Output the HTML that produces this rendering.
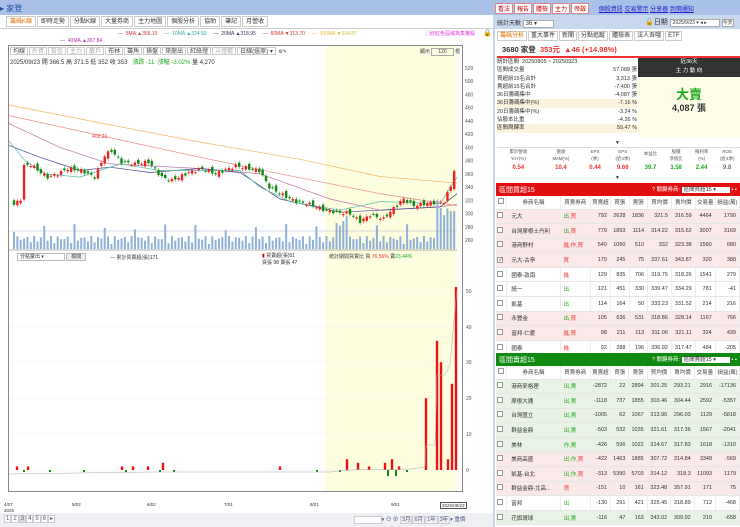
<!DOCTYPE html>
<html><head><meta charset="utf-8">
<style>
*{margin:0;padding:0;box-sizing:border-box}
body{width:740px;height:527px;overflow:hidden;background:#fff;font-family:"Liberation Sans","Noto Sans CJK TC",sans-serif;font-size:6px;color:#333;position:relative}
.a{position:absolute;white-space:nowrap}
.tb{background:#a9c1e6}
.tab{display:inline-block;border:1px solid #ccc;padding:1px 3px;margin-right:1px;background:#fff;font-size:6px;height:11px;line-height:8px}
table{border-collapse:collapse}
.tt td{height:14.6px;font-size:5.5px;border-bottom:1px solid #e6e6e6;border-right:1px solid #eee;text-align:right;padding-right:3px}
.tt td:nth-child(2){text-align:left;padding-left:4px}
.tt td:nth-child(3){text-align:left;padding-left:3px}
.tt tr.h td{height:13px;background:#fff;text-align:center;color:#444;padding:0}
.r td{background:#fbe8e8}.g td{background:#e8f3e6}.w td{background:#fff}
.cb{display:inline-block;width:6px;height:6px;border:1px solid #999;background:#fff}
</style></head><body>
<div class="a tb" style="left:0;top:0;width:740px;height:15px"></div>
<div class="a" style="left:0;top:3px;font-size:8px;color:#1a4fa8">▸ <span style="color:#1a4fa8">家登</span></div>
<div class="a" style="left:495px;top:3px;font-size:6px">
<span style="display:inline-block;border:1px solid #d88;background:#fff;color:#c00;padding:0 2px;margin-right:1px">看法</span><span style="display:inline-block;border:1px solid #d88;background:#fff;color:#c00;padding:0 2px;margin-right:1px">報告</span><span style="display:inline-block;border:1px solid #d88;background:#fff;color:#c00;padding:0 2px;margin-right:1px">體檢</span><span style="display:inline-block;border:1px solid #d88;background:#fff;color:#c00;padding:0 2px;margin-right:1px">主力</span><span style="display:inline-block;border:1px solid #d88;background:#fff;color:#c00;padding:0 2px">帝啟</span>
<span style="color:#22c;text-decoration:underline;margin-left:8px">個股資訊</span> <span style="color:#22c;text-decoration:underline">交易警示</span> <span style="color:#22c;text-decoration:underline">分享器</span> <span style="color:#22c;text-decoration:underline">到價通知</span></div>

<div class="a" style="left:6px;top:16px"><span class="tab" style="color:#e07000">籌碼K線</span><span class="tab">即時走勢</span><span class="tab">分點K線</span><span class="tab">大量券商</span><span class="tab">主力地圖</span><span class="tab">個股分析</span><span class="tab">協助</span><span class="tab">筆記</span><span class="tab">月營收</span></div>
<div class="a" style="left:0;top:28px;width:493px;height:499px;border-top:1px solid #ccc"></div>
<div class="a" style="left:118px;top:31px;font-size:5px"><span style="color:#c33">— &nbsp;5MA ▲356.10</span> &nbsp;&nbsp;&nbsp; <span style="color:#3a9">— &nbsp;10MA ▲324.50</span> &nbsp;&nbsp;&nbsp; <span style="color:#336">— &nbsp;20MA ▲318.95</span> &nbsp;&nbsp;&nbsp; <span style="color:#d33">— &nbsp;60MA ▼313.70</span> &nbsp;&nbsp;&nbsp; <span style="color:#db3">— &nbsp;100MA ▼334.87</span></div>
<div class="a" style="left:60px;top:38px;font-size:5px;color:#a3a">— &nbsp;40MA ▲307.84</div>
<div class="a" style="left:425px;top:30px;font-size:5px;color:#d3d">◯欣紅色區域為集權股</div>
<div class="a" style="left:483px;top:29px;font-size:7px">🔒</div>

<div class="a" style="left:8px;top:45px;width:455px;height:447px;border:1px solid #888"></div>
<div class="a" style="left:325px;top:46px;width:132px;height:445px;background:#fdfde0"></div>
<div class="a" style="left:10px;top:47px;font-size:5px;color:#444"><span class="tab" style="padding:0 2px;height:8px">均線</span><span class="tab" style="padding:0 2px;height:8px;color:#aaa">外資</span><span class="tab" style="padding:0 2px;height:8px;color:#aaa">投信</span><span class="tab" style="padding:0 2px;height:8px;color:#aaa">主力</span><span class="tab" style="padding:0 2px;height:8px;color:#aaa">散戶</span><span class="tab" style="padding:0 2px;height:8px">布林</span><span class="tab" style="padding:0 2px;height:8px">籌角</span><span class="tab" style="padding:0 2px;height:8px">操盤</span><span class="tab" style="padding:0 2px;height:8px">來龍出</span><span class="tab" style="padding:0 2px;height:8px">紅綠燈</span><span class="tab" style="padding:0 2px;height:8px;color:#aaa">斗燈籠</span><span class="tab" style="padding:0 2px;height:8px">日線(還原) ▾</span> ⚙✎</div>
<div class="a" style="left:420px;top:48px;font-size:5px">顯示 <span style="border:1px solid #aaa;padding:0 6px">120</span> 根</div>
<div class="a" style="left:10px;top:57px;font-size:6px">2025/09/23 開 366.5 高 371.5 低 352 收 353 &nbsp; <span style="color:#2a2">漲跌 -11 &nbsp;漲幅 -3.02%</span> 量 4,270</div>

<svg class="a" style="left:0;top:0" width="493" height="527" id="sv"></svg>

<div class="a" style="left:17px;top:253px;font-size:5px"><span style="border:1px solid #bbb;padding:0 20px 0 2px">分點彙出 ▾</span> <span style="border:1px solid #bbb;background:#eee;padding:0 4px">檢閱</span></div>
<div class="a" style="left:110px;top:254px;font-size:5px">— 累計買賣超(張)171</div>
<div class="a" style="left:262px;top:253px;font-size:5px;line-height:7px"><span style="color:#c00">▮</span> 買賣超(張)51<br>買張 98 賣張 47</div>
<div class="a" style="left:329px;top:253px;font-size:5px">統計期間買賣比 買 <span style="color:#e33">76.56%</span> 賣<span style="color:#2a2">23.44%</span></div>
<div class="a" style="left:4px;top:502px;font-size:4.5px;line-height:6px">4/07<br>2025</div>
<div class="a" style="left:72px;top:502px;font-size:4.5px">5/02</div>
<div class="a" style="left:147px;top:502px;font-size:4.5px">6/02</div>
<div class="a" style="left:224px;top:502px;font-size:4.5px">7/01</div>
<div class="a" style="left:310px;top:502px;font-size:4.5px">8/01</div>
<div class="a" style="left:391px;top:502px;font-size:4.5px">9/01</div>
<div class="a" style="left:440px;top:502px;font-size:4.5px;border:1px solid #555;padding:0 1px">2025/09/23</div>
<div class="a" style="left:0;top:513px;width:493px;height:14px;background:#eef0f4"></div>
<div class="a" style="left:4px;top:515px;font-size:6px;color:#558"><span style="border:1px solid #ccc;background:#fff;padding:0 1px">1</span><span style="border:1px solid #ccc;background:#fff;padding:0 1px">2</span><span style="border:1px solid #ccc;background:#ddd;padding:0 1px">3</span><span style="border:1px solid #ccc;background:#fff;padding:0 1px">4</span><span style="border:1px solid #ccc;background:#fff;padding:0 1px">5</span><span style="border:1px solid #ccc;background:#fff;padding:0 1px">6</span><span style="border:1px solid #ccc;background:#fff;padding:0 1px">▸</span></div>
<div class="a" style="left:354px;top:515px;font-size:5.5px;color:#558"><span style="border:1px solid #ccc;background:#fff;padding:0 12px">&nbsp;</span>▾ ⊖ ⊕ <span style="border:1px solid #ccc;padding:0 1px">3月</span><span style="border:1px solid #ccc;padding:0 1px">6月</span><span style="border:1px solid #ccc;padding:0 1px">1年</span><span style="border:1px solid #ccc;padding:0 1px">3年</span>▾ 重價</div>
<div class="a" style="left:493px;top:15px;width:2px;height:512px;background:#c8d4e8"></div>

<div class="a" style="left:495px;top:15px;width:245px;height:14px;background:#c8d8ef"></div>
<div class="a" style="left:497px;top:18px;font-size:6px">統計天數 <span style="border:1px solid #aaa;background:#fff;padding:0 16px 0 2px">36 ▾</span></div>
<div class="a" style="left:645px;top:17px;font-size:7px">🔓日期 <span style="border:1px solid #aaa;background:#fff;font-size:5px;padding:0 12px 0 2px">2025/9/23 ▾ ◂ ▸</span> <span style="border:1px solid #aaa;background:#fff;font-size:5px">今天</span></div>
<div class="a" style="left:497px;top:31px;font-size:5.5px"><span class="tab" style="color:#e07000;padding:0 2px;height:10px">籌碼分析</span><span class="tab" style="padding:0 2px;height:10px">重大事件</span><span class="tab" style="padding:0 2px;height:10px">新聞</span><span class="tab" style="padding:0 2px;height:10px">分點追蹤</span><span class="tab" style="padding:0 2px;height:10px">體檢表</span><span class="tab" style="padding:0 2px;height:10px">法人吾哦</span><span class="tab" style="padding:0 2px;height:10px">ETF</span></div>
<div class="a" style="left:502px;top:44px;font-size:7.5px;font-weight:bold"><span style="color:#333">3680 家登</span> &nbsp;<span style="color:#e33">353元 &nbsp;▲46 (+14.98%)</span></div>
<div class="a" style="left:497px;top:56px;width:243px;height:1.5px;background:#e33"></div>
<div class="a" style="left:497px;top:58px;width:140px;font-size:5.5px;line-height:8.3px">
<div style="display:flex;justify-content:space-between"><span>統計區間 &nbsp;20250805 ~ 20250923</span></div>
<div style="display:flex;justify-content:space-between"><span>區間成交量</span><span>57,089 張</span></div>
<div style="display:flex;justify-content:space-between"><span>買超前15名合計</span><span>3,313 張</span></div>
<div style="display:flex;justify-content:space-between"><span>賣超前15名合計</span><span>-7,400 張</span></div>
<div style="display:flex;justify-content:space-between"><span>36日籌碼集中</span><span>-4,087 張</span></div>
<div style="display:flex;justify-content:space-between;background:#fbf3dc"><span>36日籌碼集中(%)</span><span>-7.16 %</span></div>
<div style="display:flex;justify-content:space-between"><span>20日籌碼集中(%)</span><span>-3.24 %</span></div>
<div style="display:flex;justify-content:space-between"><span>佔股本比重</span><span>-4.26 %</span></div>
<div style="display:flex;justify-content:space-between;background:#fbf3dc"><span>區間周轉率</span><span>59.47 %</span></div></div>
<div class="a" style="left:638px;top:58px;width:102px;height:19px;background:#333;color:#fff;font-size:5.5px;text-align:center;line-height:9px">近36天<br>主 力 動 向</div>
<div class="a" style="left:638px;top:77px;width:102px;height:61px;background:#fdfde8"></div>
<div class="a" style="left:638px;top:84px;width:102px;text-align:center;font-size:13px;font-weight:bold;color:#2a2">大賣</div>
<div class="a" style="left:638px;top:101px;width:102px;text-align:center;font-size:9px;font-weight:bold;color:#333">4,087 張</div>
<div class="a" style="left:615px;top:140px;font-size:5px">▼</div>
<div class="a" style="left:497px;top:147px;width:243px;border-top:1px solid #ddd"></div>
<div class="a" style="left:497px;top:147px;width:243px;display:flex;font-size:4.5px;text-align:center;color:#555">
<div style="flex:1;line-height:7px;padding-top:1px">累計營收<br>YoY(%)</div><div style="flex:1;line-height:7px;padding-top:1px">營收<br>MoM(%)</div><div style="flex:.6;line-height:7px;padding-top:1px">EPS<br>(季)</div><div style="flex:.7;line-height:7px;padding-top:1px">EPS<br>(近4季)</div><div style="flex:.6;line-height:14px">本益比</div><div style="flex:.6;line-height:7px;padding-top:1px">股價<br>淨值比</div><div style="flex:.6;line-height:7px;padding-top:1px">殖利率<br>(%)</div><div style="flex:.6;line-height:7px;padding-top:1px">ROE<br>(近4季)</div></div>
<div class="a" style="left:497px;top:165px;width:243px;display:flex;font-size:6px;font-weight:bold;text-align:center">
<div style="flex:1;color:#e33">0.54</div><div style="flex:1;color:#e33">10.4</div><div style="flex:.6;color:#e33">0.44</div><div style="flex:.7;color:#e33">9.66</div><div style="flex:.6;color:#2a2">39.7</div><div style="flex:.6;color:#2a2">3.58</div><div style="flex:.6;color:#2a2">2.44</div><div style="flex:.6;color:#333;font-weight:normal">9.8</div></div>
<div class="a" style="left:615px;top:175px;font-size:5px">▼</div>

<div class="a" style="left:496px;top:183px;width:244px;height:13px;background:#e01010;color:#fff;font-size:7px;padding:2px 3px">區間買超15<span style="float:right;font-size:5.5px">? 關鍵券商: <span style="background:#fff;color:#333;padding:0 14px 0 2px">區間買超15 ▾</span> ▪ ▪</span></div>
<table class="a tt" style="left:496px;top:196px;width:244px">
<tr class="h"><td><span class="cb"></span></td><td style="text-align:center">券商名稱</td><td>買賣券商</td><td>買賣超</td><td>買張</td><td>賣張</td><td>買均價</td><td>賣均價</td><td>交易量</td><td>損益(萬)</td></tr>
<tr class="r"><td><span class="cb"></span></td><td>元大</td><td><span style="color:#2a2">出</span><span style="color:#e33">,買</span></td><td>792</td><td>2628</td><td>1836</td><td>321.5</td><td>316.59</td><td>4464</td><td>1790</td></tr>
<tr class="r"><td><span class="cb"></span></td><td>台灣摩根士丹利</td><td><span style="color:#2a2">出</span><span style="color:#e33">,買</span></td><td>779</td><td>1893</td><td>1114</td><td>314.22</td><td>315.62</td><td>3007</td><td>3169</td></tr>
<tr class="r"><td><span class="cb"></span></td><td>港商野村</td><td><span style="color:#e33">進,作,買</span></td><td>540</td><td>1050</td><td>510</td><td>332</td><td>323.38</td><td>1560</td><td>680</td></tr>
<tr class="r"><td><span class="cb" style="font-size:5px;line-height:4px">✓</span></td><td>元大-古亭</td><td><span style="color:#e33">買</span></td><td>170</td><td>245</td><td>75</td><td>337.61</td><td>343.87</td><td>320</td><td>380</td></tr>
<tr class="w"><td><span class="cb"></span></td><td>國泰-敦南</td><td><span style="color:#e33">進</span></td><td>129</td><td>835</td><td>706</td><td>319.75</td><td>318.26</td><td>1541</td><td>279</td></tr>
<tr class="w"><td><span class="cb"></span></td><td>統一</td><td><span style="color:#2a2">出</span></td><td>121</td><td>451</td><td>330</td><td>339.47</td><td>334.29</td><td>781</td><td>-41</td></tr>
<tr class="w"><td><span class="cb"></span></td><td>凱基</td><td><span style="color:#2a2">出</span></td><td>114</td><td>164</td><td>50</td><td>333.23</td><td>331.52</td><td>214</td><td>216</td></tr>
<tr class="r"><td><span class="cb"></span></td><td>永豐金</td><td><span style="color:#2a2">出</span><span style="color:#e33">,買</span></td><td>105</td><td>636</td><td>531</td><td>318.86</td><td>328.14</td><td>1167</td><td>766</td></tr>
<tr class="r"><td><span class="cb"></span></td><td>富邦-仁愛</td><td><span style="color:#e33">進,買</span></td><td>98</td><td>211</td><td>113</td><td>311.06</td><td>321.11</td><td>324</td><td>439</td></tr>
<tr class="w"><td><span class="cb"></span></td><td>國泰</td><td><span style="color:#e33">進</span></td><td>92</td><td>288</td><td>196</td><td>336.92</td><td>317.47</td><td>484</td><td>-205</td></tr>
</table>
<div class="a" style="left:496px;top:353px;width:244px;height:13px;background:#108a10;color:#fff;font-size:7px;padding:2px 3px">區間賣超15<span style="float:right;font-size:5.5px">? 關鍵券商: <span style="background:#fff;color:#333;padding:0 14px 0 2px">區間賣超15 ▾</span> ▪ ▪</span></div>
<table class="a tt" style="left:496px;top:366px;width:244px">
<tr class="h"><td><span class="cb"></span></td><td style="text-align:center">券商名稱</td><td>買賣券商</td><td>賣賣超</td><td>買張</td><td>賣張</td><td>買均價</td><td>賣均價</td><td>交易量</td><td>損益(萬)</td></tr>
<tr class="g"><td><span class="cb"></span></td><td>港商麥格理</td><td><span style="color:#2a2">出,賣</span></td><td>-2872</td><td>22</td><td>2894</td><td>301.25</td><td>293.21</td><td>2916</td><td>-17136</td></tr>
<tr class="g"><td><span class="cb"></span></td><td>摩根大通</td><td><span style="color:#2a2">出,賣</span></td><td>-1118</td><td>737</td><td>1855</td><td>303.46</td><td>304.44</td><td>2592</td><td>-5357</td></tr>
<tr class="g"><td><span class="cb"></span></td><td>台灣匯立</td><td><span style="color:#2a2">出,賣</span></td><td>-1005</td><td>62</td><td>1067</td><td>313.96</td><td>296.03</td><td>1129</td><td>-5818</td></tr>
<tr class="g"><td><span class="cb"></span></td><td>群益金鼎</td><td><span style="color:#2a2">出,賣</span></td><td>-503</td><td>532</td><td>1035</td><td>321.61</td><td>317.36</td><td>1567</td><td>-2041</td></tr>
<tr class="g"><td><span class="cb"></span></td><td>美林</td><td><span style="color:#2a2">作,賣</span></td><td>-426</td><td>596</td><td>1022</td><td>314.67</td><td>317.83</td><td>1618</td><td>-1310</td></tr>
<tr class="r"><td><span class="cb"></span></td><td>美商高盛</td><td><span style="color:#2a2">出,作,</span><span style="color:#e33">買</span></td><td>-422</td><td>1463</td><td>1885</td><td>307.72</td><td>314.84</td><td>3348</td><td>-569</td></tr>
<tr class="r"><td><span class="cb"></span></td><td>凱基-台北</td><td><span style="color:#2a2">出,作,</span><span style="color:#e33">買</span></td><td>-313</td><td>5390</td><td>5703</td><td>314.12</td><td>318.3</td><td>11093</td><td>1179</td></tr>
<tr class="r"><td><span class="cb"></span></td><td>群益金鼎-北高...</td><td><span style="color:#e33">買</span></td><td>-151</td><td>10</td><td>161</td><td>323.48</td><td>357.91</td><td>171</td><td>75</td></tr>
<tr class="w"><td><span class="cb"></span></td><td>富邦</td><td><span style="color:#2a2">出</span></td><td>-130</td><td>291</td><td>421</td><td>325.45</td><td>318.89</td><td>712</td><td>-468</td></tr>
<tr class="g"><td><span class="cb"></span></td><td>花旗環球</td><td><span style="color:#2a2">出,賣</span></td><td>-116</td><td>47</td><td>163</td><td>343.02</td><td>309.92</td><td>210</td><td>-658</td></tr>
</table>

<script>
var s='',Y=p=>68+(520-p)*0.6615;
for(var p=260;p<=520;p+=20){s+='<text x="465" y="'+(Y(p)+2)+'" font-size="5" fill="#555">'+p+'</text>';}
[[0,470],[10,434],[20,398],[30,362],[40,327],[50,291]].forEach(a=>{s+='<text x="466" y="'+(a[1]+2)+'" font-size="5" fill="#555">'+a[0]+'</text><line x1="9" x2="457" y1="'+a[1]+'" y2="'+a[1]+'" stroke="#f0f0f0" stroke-width=".5"/>';});
var k=[[0,313],[2,322],[3,372],[5,374],[8,362],[10,355],[13,360],[16,368],[20,365],[24,355],[27,388],[29,395],[32,378],[36,375],[40,378],[44,355],[47,350],[52,362],[56,368],[60,360],[63,366],[66,372],[70,368],[73,365],[76,340],[80,328],[84,318],[88,314],[92,306],[96,302],[100,300],[103,288],[106,298],[110,292],[113,308],[116,322],[119,312],[124,316],[128,318],[130,342],[131,365]];
var N=132,cl=[];for(var i=0;i<N;i++){for(var j=0;j<k.length-1;j++){if(i>=k[j][0]&&i<=k[j+1][0]){var t=(i-k[j][0])/(k[j+1][0]-k[j][0]);cl[i]=k[j][1]+t*(k[j+1][1]-k[j][1])+Math.sin(i*2.3)*2.5;break;}}if(cl[i]==null)cl[i]=353;}
var X=i=>14+i*3.36;
function ma(pts,c){s+='<polyline fill="none" stroke="'+c+'" stroke-width=".7" points="'+pts.map(a=>a[0]+','+Y(a[1]).toFixed(1)).join(' ')+'"/>';}
ma([[9,464],[100,437],[200,408],[300,382],[380,356],[457,346]],'#f0b860');
ma([[9,448],[100,418],[200,385],[280,360],[380,330],[457,312]],'#e88');
ma([[9,436],[60,400],[110,375],[200,368],[260,360],[330,322],[380,305],[440,310],[457,314]],'#b7a');
ma([[9,403],[40,385],[80,365],[110,370],[150,362],[200,368],[240,362],[280,322],[340,302],[380,305],[440,310],[457,330]],'#448');
ma([[9,410],[25,380],[45,360],[80,355],[120,375],[160,365],[240,365],[260,340],[290,318],[340,305],[380,318],[440,315],[457,355]],'#5ba');
for(var i=0;i<N;i++){var o=i?cl[i-1]+Math.cos(i*1.7)*4:320,c=cl[i],up=c>=o,hi=Math.max(o,c)+3,lo=Math.min(o,c)-3,x=X(i),col=up?'#e22':'#181';
s+='<line x1="'+x+'" x2="'+x+'" y1="'+Y(hi)+'" y2="'+Y(lo)+'" stroke="'+col+'" stroke-width=".5"/><rect x="'+(x-1.2)+'" y="'+Y(Math.max(o,c))+'" width="2.4" height="'+Math.max(1,Math.abs(o-c)*0.66)+'" fill="'+col+'"/>';
var v=5+Math.abs(Math.sin(i*1.3))*8+(i>95&&i<100?15:0)+(i>125?28:0)+(i%9==0?12:0);s+='<rect x="'+(x-1)+'" y="'+(249-v)+'" width="2" height="'+v+'" fill="#8fb0d8"/>';}
s+='<text x="92" y="138" font-size="5" fill="#e33">402.21</text><line x1="9" x2="457" y1="250" y2="250" stroke="#666" stroke-width=".6"/><line x1="9" x2="457" y1="231" y2="231" stroke="#9ac" stroke-width=".4"/>';
[[426,20],[437,36],[441,30],[448,3],[452,24],[456,51],[17,1],[28,1],[122,1],[133,1],[148,1],[163,2],[280,1],[347,3],[358,2],[369,1],[385,2],[392,3],[399,1]].forEach(a=>{s+='<rect x="'+(a[0]-1.2)+'" y="'+(470-a[1]*3.59)+'" width="2.4" height="'+(a[1]*3.59)+'" fill="#e11"/>';});
[24,50,84,126,160,174,317,340,388,396,407].forEach(x=>{s+='<rect x="'+(x-1)+'" y="470" width="2" height="'+(x>385&&x<400?6:2)+'" fill="#181"/>';});
s+='<polyline fill="none" stroke="#aaa" stroke-width=".5" points="9,474 150,472 330,472 350,470 410,469 425,467 426,445 435,445 437,375 445,375 450,365 455,310 457,290"/>';
document.getElementById('sv').innerHTML=s;
</script>
</body></html>
